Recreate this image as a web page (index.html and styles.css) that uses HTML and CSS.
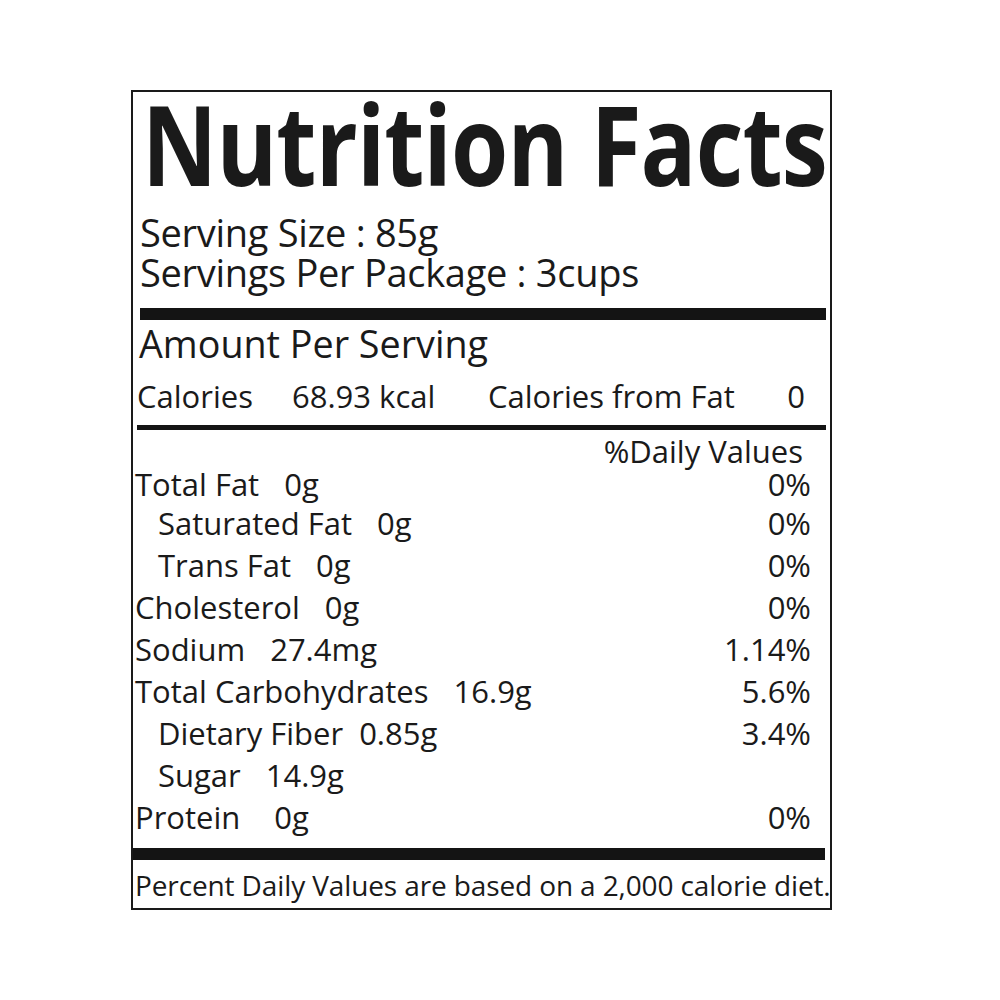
FILE: index.html
```html
<!DOCTYPE html>
<html lang="en">
<head>
<meta charset="utf-8">
<title>Nutrition Facts</title>
<link rel="stylesheet" href="styles.css">
</head>
<body>
<section class="label">
  <h1 class="title">Nutrition Facts</h1>
  <div class="serving">
    <p class="serving-line">Serving Size : 85g</p>
    <p class="serving-line">Servings Per Package : 3cups</p>
  </div>
  <div class="bar bar-top"></div>
  <p class="amount">Amount Per Serving</p>
  <div class="calories">
    <span>Calories</span>
    <span>68.93 kcal</span>
    <span>Calories from Fat</span>
    <span>0</span>
  </div>
  <div class="rule"></div>
  <p class="dv-head">%Daily Values</p>
  <ul class="nutrients">
    <li class="row first"><span><span class="nm">Total Fat</span><span class="amt">0g</span></span><span class="dv">0%</span></li>
    <li class="row sub"><span><span class="nm">Saturated Fat</span><span class="amt">0g</span></span><span class="dv">0%</span></li>
    <li class="row sub"><span><span class="nm">Trans Fat</span><span class="amt">0g</span></span><span class="dv">0%</span></li>
    <li class="row"><span><span class="nm">Cholesterol</span><span class="amt">0g</span></span><span class="dv">0%</span></li>
    <li class="row"><span><span class="nm">Sodium</span><span class="amt">27.4mg</span></span><span class="dv">1.14%</span></li>
    <li class="row"><span><span class="nm">Total Carbohydrates</span><span class="amt">16.9g</span></span><span class="dv">5.6%</span></li>
    <li class="row sub"><span><span class="nm">Dietary Fiber</span><span class="amt tight">0.85g</span></span><span class="dv">3.4%</span></li>
    <li class="row sub"><span><span class="nm">Sugar</span><span class="amt">14.9g</span></span><span class="dv"></span></li>
    <li class="row"><span><span class="nm">Protein</span><span class="amt wide">0g</span></span><span class="dv">0%</span></li>
  </ul>
  <div class="bar bar-bottom"></div>
  <p class="footnote">Percent Daily Values are based on a 2,000 calorie diet.</p>
</section>
</body>
</html>
```
FILE: styles.css
```css
* { box-sizing: border-box; }

html, body {
  margin: 0;
  padding: 0;
  background: #ffffff;
}

body {
  font-family: "Open Sans", "Noto Sans", sans-serif;
  color: #1a1a1a;
}

p, h1, ul, li { margin: 0; padding: 0; }
ul { list-style: none; }

.label {
  margin: 90px 0 0 131px;
  width: 701px;
  border: 2px solid #1a1a1a;
  padding: 0 0 3px 0;
}

.title {
  font-size: 112px;
  font-weight: 700;
  line-height: 101px;
  height: 101px;
  padding-left: 9px;
  white-space: nowrap;
  letter-spacing: -1px;
  transform: scaleX(0.826);
  transform-origin: 9px 50%;
}

.serving {
  margin-top: 19px;
  padding-left: 7px;
}

.serving-line {
  font-size: 38px;
  line-height: 40px;
  height: 40px;
  white-space: nowrap;
  letter-spacing: -0.3px;
}

.bar {
  background: #141414;
  height: 12px;
}

.bar-top {
  margin: 16px 4px 0 7px;
}

.amount {
  margin-top: 4px;
  padding-left: 6px;
  font-size: 37.7px;
  line-height: 40px;
  height: 40px;
  white-space: nowrap;
}

.calories {
  margin-top: 12px;
  display: grid;
  grid-template-columns: 155px 196px 1fr auto;
  padding: 0 25px 0 4px;
  font-size: 31px;
  line-height: 40px;
  height: 40px;
  white-space: nowrap;
}

.rule {
  margin: 9px 4px 0 4px;
  height: 5px;
  background: #141414;
}

.dv-head {
  margin-top: 6px;
  text-align: right;
  padding-right: 27px;
  font-size: 31px;
  line-height: 30px;
  height: 30px;
}

.nutrients {
  font-size: 31px;
}

.row {
  display: flex;
  justify-content: space-between;
  line-height: 42px;
  height: 42px;
  padding: 0 19px 0 2px;
  white-space: nowrap;
}

.row.first {
  line-height: 36px;
  height: 36px;
}

.row.sub {
  padding-left: 25px;
}

.amt { margin-left: 25px; }
.amt.tight { margin-left: 16px; }
.amt.wide { margin-left: 34px; }

.bar-bottom {
  margin: 10px 5px 0 0;
}

.footnote {
  margin-top: 5px;
  padding-left: 2px;
  font-size: 28px;
  letter-spacing: -0.12px;
  line-height: 40px;
  height: 40px;
  white-space: nowrap;
}
```
